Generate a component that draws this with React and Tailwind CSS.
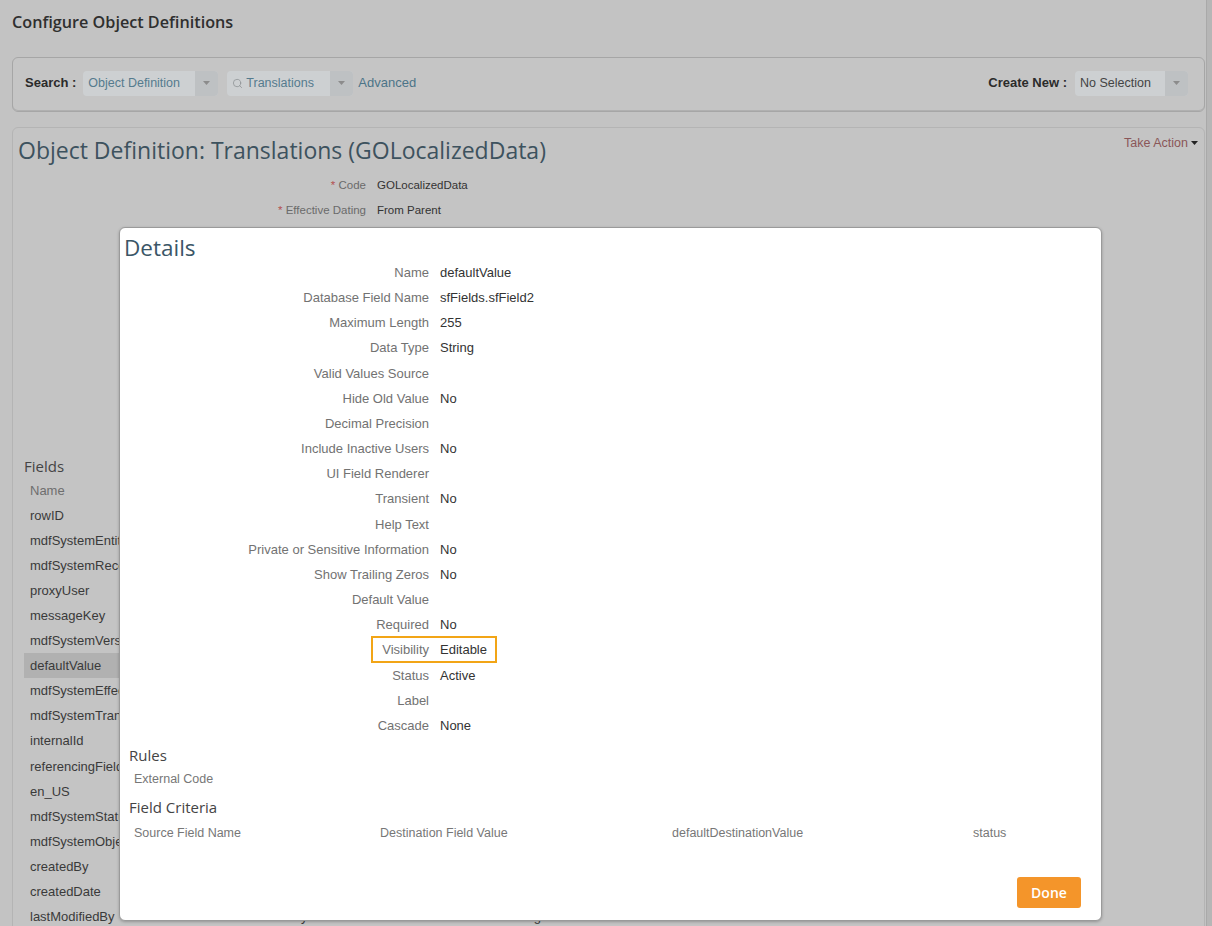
import React from 'react';
import { Search } from 'lucide-react';

const details = [
  ['Name', 'defaultValue'],
  ['Database Field Name', 'sfFields.sfField2'],
  ['Maximum Length', '255'],
  ['Data Type', 'String'],
  ['Valid Values Source', ''],
  ['Hide Old Value', 'No'],
  ['Decimal Precision', ''],
  ['Include Inactive Users', 'No'],
  ['UI Field Renderer', ''],
  ['Transient', 'No'],
  ['Help Text', ''],
  ['Private or Sensitive Information', 'No'],
  ['Show Trailing Zeros', 'No'],
  ['Default Value', ''],
  ['Required', 'No'],
  ['Visibility', 'Editable'],
  ['Status', 'Active'],
  ['Label', ''],
  ['Cascade', 'None'],
];

const fields = [
  'rowID',
  'mdfSystemEntityId',
  'mdfSystemRecordId',
  'proxyUser',
  'messageKey',
  'mdfSystemVersionId',
  'defaultValue',
  'mdfSystemEffectiveStartDate',
  'mdfSystemTransactionSequence',
  'internalId',
  'referencingFieldName',
  'en_US',
  'mdfSystemStatus',
  'mdfSystemObjectType',
  'createdBy',
  'createdDate',
];

function Caret() {
  return (
    <svg width="7" height="4" viewBox="0 0 7 4">
      <path d="M0 0 L7 0 L3.5 4 Z" fill="#8c8c8c" />
    </svg>
  );
}

function SelectBox({ width, icon, children }) {
  return (
    <div className={`flex h-[25px] ${width} rounded-sm bg-[#cdd0d2] text-[12.5px] text-[#557b8e]`}>
      <div className="flex flex-1 items-center gap-[3px] pl-[5px] overflow-hidden whitespace-nowrap">
        {icon}
        {children}
      </div>
      <div className="flex w-[23px] items-center justify-center bg-[#bec1c3] rounded-r-sm">
        <Caret />
      </div>
    </div>
  );
}

export default function App() {
  return (
    <div className="relative flex h-[926px] w-[1212px] overflow-hidden bg-[#c3c3c3] font-['Liberation_Sans',Arial,sans-serif] text-[13px]">
      <div className="w-[1206px] pl-3 pr-px">
        <h1 className="h-[57px] pt-[11px] font-['Open_Sans',sans-serif] text-[16.2px] font-semibold leading-[22px] text-[#2f2f2f]">
          Configure Object Definitions
        </h1>

        {/* search bar */}
        <div className="flex h-[55px] items-center rounded-md border border-[#a6a6a6] bg-[#c5c5c5] pb-[3px] pl-3 pr-4 shadow-[inset_0_-1px_0_#b0b0b0]">
          <span className="mr-[7px] font-bold text-[#2b2b2b]">Search :</span>
          <SelectBox width="w-[135px]">Object Definition</SelectBox>
          <div className="w-[9px]" />
          <SelectBox width="w-[126px]" icon={<Search size={11} strokeWidth={1.6} className="text-[#8a8f92]" />}>
            Translations
          </SelectBox>
          <span className="ml-[5px] text-[#4c7488]">Advanced</span>
          <div className="flex-1" />
          <span className="mr-[8px] font-bold text-[#2b2b2b]">Create New :</span>
          <SelectBox width="w-[113px]">
            <span className="text-[#444]">No Selection</span>
          </SelectBox>
        </div>

        {/* object definition panel */}
        <div className="mt-[15px] h-[900px] rounded-t-md border border-[#b4b4b4] bg-[#c4c4c4]">
          <div className="flex items-start justify-between pl-[5px] pr-[6px] pt-[7px]">
            <h2 className="font-['Open_Sans',sans-serif] text-[23px] leading-[30px] text-[#3d525e]">
              Object Definition: Translations (GOLocalizedData)
            </h2>
            <div className="mt-[-1px] flex items-center gap-[3px] text-[12.5px] text-[#8a5658]">
              Take Action
              <svg width="7" height="4" viewBox="0 0 7 4">
                <path d="M0 0 L7 0 L3.5 4 Z" fill="#222" />
              </svg>
            </div>
          </div>

          <div className="mt-[8px] grid grid-cols-[353px_1fr] gap-x-[11px] text-[11.5px] leading-[25px]">
            <span className="text-right text-[#6b6b6b]">
              <span className="text-[#b35151]">* </span>Code
            </span>
            <span className="text-[#333]">GOLocalizedData</span>
            <span className="text-right text-[#6b6b6b]">
              <span className="text-[#b35151]">* </span>Effective Dating
            </span>
            <span className="text-[#333]">From Parent</span>
          </div>

          <div className="mt-[233px] pl-[11px]">
            <div className="font-['Open_Sans',sans-serif] text-[15px] leading-[20px] text-[#444]">Fields</div>
            <div className="mt-[2px] flex flex-col text-[13px]">
              <div className="h-[25.05px] pl-[6px] leading-[25px] text-[#6e6e6e]">Name</div>
              {fields.map((f) => (
                <div
                  key={f}
                  className={`h-[25.05px] w-[96px] overflow-hidden whitespace-nowrap pl-[6px] leading-[25px] text-[#3a3a3a] ${
                    f === 'defaultValue' ? 'bg-[#b1b1b1]' : ''
                  }`}
                >
                  {f}
                </div>
              ))}
              <div className="grid h-[25.05px] grid-cols-[193px_170px_114px_66px] pl-[6px] leading-[25px] text-[#3a3a3a]">
                <span>lastModifiedBy</span>
                <span>lastModifiedBy</span>
                <span>255</span>
                <span>String</span>
              </div>
            </div>
          </div>
        </div>
      </div>
      <div className="w-[6px] border-l border-[#a9a9a9] bg-[#b6b6b6]" />

      {/* details dialog */}
      <div className="absolute left-[119px] top-[227px] flex h-[694px] w-[983px] flex-col rounded-md border border-[#9a9a9a] bg-white shadow-[0_1px_3px_rgba(0,0,0,0.25)]">
        <div className="pl-[4px] pt-[8px] font-['Open_Sans',sans-serif] text-[22.5px] leading-[24px] text-[#3b5667]">
          Details
        </div>

        <div className="flex flex-col text-[13px]">
          {details.map(([label, value]) => (
            <div key={label} className="relative grid h-[25.17px] grid-cols-[309px_1fr] gap-x-[11px] leading-[25px]">
              <span className="text-right text-[#727272]">{label}</span>
              <span className="text-[#333]">{value}</span>
              {label === 'Visibility' && (
                <div className="absolute left-[251px] top-[-1px] h-[27px] w-[126px] border-2 border-[#f2a516]" />
              )}
            </div>
          ))}
        </div>

        <div className="mt-[7px] pl-[9px] font-['Open_Sans',sans-serif] text-[15px] leading-[20px] text-[#444]">Rules</div>
        <div className="mt-[2px] pl-[14px] text-[12.5px] leading-[25px] text-[#777]">External Code</div>
        <div className="mt-[5px] pl-[9px] font-['Open_Sans',sans-serif] text-[15px] leading-[20px] text-[#444]">
          Field Criteria
        </div>
        <div className="mt-[4px] grid grid-cols-[246px_292px_301px_1fr] pl-[14px] text-[12.5px] leading-[25px] text-[#777]">
          <span>Source Field Name</span>
          <span>Destination Field Value</span>
          <span>defaultDestinationValue</span>
          <span>status</span>
        </div>

        <div className="mt-auto flex justify-end pb-[12px] pr-[20px]">
          <button className="h-[31px] w-[64px] rounded-[3px] bg-[#f4952a] font-['Open_Sans',sans-serif] text-[14px] font-semibold text-white">
            Done
          </button>
        </div>
      </div>
    </div>
  );
}
